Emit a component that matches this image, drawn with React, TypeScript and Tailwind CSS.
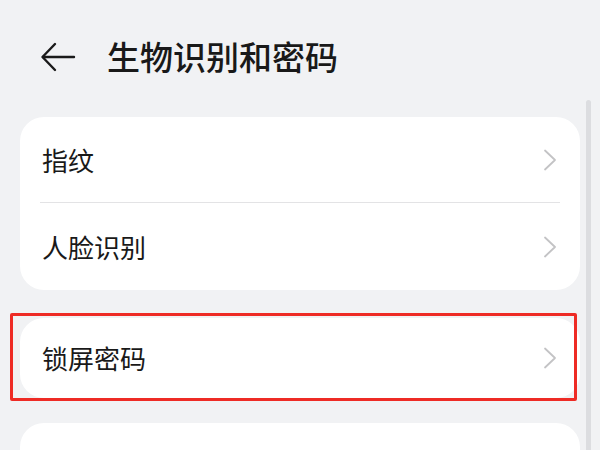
const font = { fontFamily: '"Noto Sans CJK SC", "Noto Sans", sans-serif' };

function Chevron() {
  return (
    <svg width="14" height="22" viewBox="0 0 14 22" fill="none" stroke="#c3c3c5" strokeWidth="1.8" strokeLinecap="round" strokeLinejoin="round">
      <path d="M2 1.5L12 11L2 20.5" />
    </svg>
  );
}

function Row({ label, height, divider }: { label: string; height: string; divider?: boolean }) {
  return (
    <div className={`relative flex items-center justify-between ${height} pl-[22px] pr-[23px]`}>
      <span className="text-[26px] leading-none text-[#191919]">{label}</span>
      <Chevron />
      {divider && <div className="absolute bottom-0 left-[20px] right-[20px] h-px bg-[#e3e3e5]" />}
    </div>
  );
}

export default function App() {
  return (
    <div className="relative w-[600px] h-[450px] overflow-hidden bg-[#f1f2f4]" style={font}>
      <div className="flex items-center h-[117px] pl-[40px] pb-[4px]">
        <svg width="36" height="30" viewBox="0 0 36 30" fill="none" stroke="#1a1a1a" strokeWidth="2.4" strokeLinecap="round" strokeLinejoin="round">
          <path d="M34 15H3" />
          <path d="M15 2L2.5 15L15 28" />
        </svg>
        <h1 className="ml-[31px] text-[33px] leading-none font-medium text-[#191919]">生物识别和密码</h1>
      </div>

      <div className="flex flex-col pl-[20px] pr-[20px]">
        <div className="bg-white rounded-[24px]">
          <Row label="指纹" height="h-[86px]" divider />
          <Row label="人脸识别" height="h-[87px]" />
        </div>
        <div className="relative mt-[28px]">
          <div className="bg-white rounded-[24px]">
            <Row label="锁屏密码" height="h-[80px]" />
          </div>
          <div className="absolute left-[-10px] right-[3px] top-[-5px] bottom-[-3px] border-[3px] border-[#ee2b25] rounded-[2px]" />
        </div>
        <div className="mt-[25px] bg-white rounded-[24px] h-[120px]" />
      </div>

      <div className="absolute right-[9px] top-[100px] bottom-0 w-[5px] bg-[#dcdde0] rounded-t-full" />
    </div>
  );
}
